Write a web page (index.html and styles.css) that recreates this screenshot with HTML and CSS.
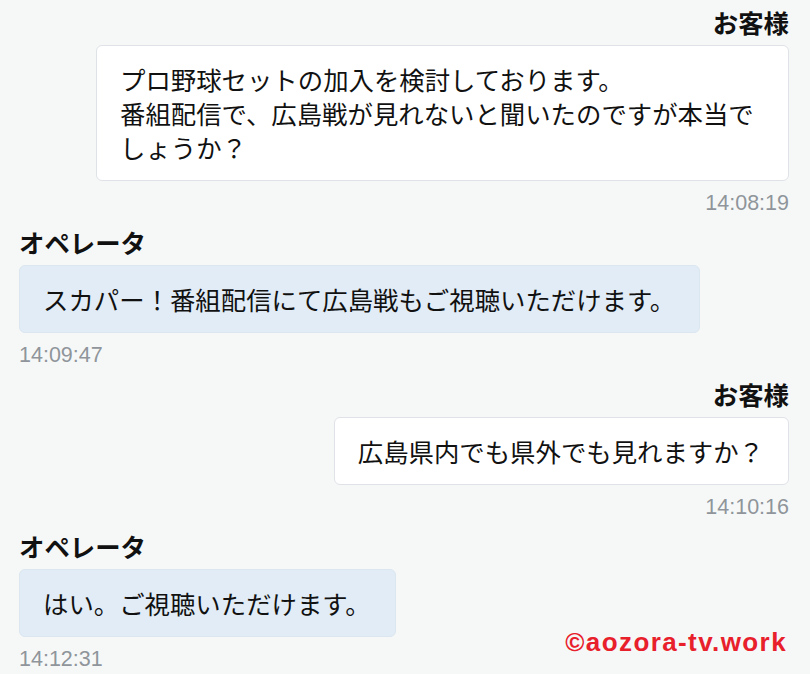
FILE: index.html
```html
<!DOCTYPE html>
<html lang="ja">
<head>
<meta charset="utf-8">
<title>チャット</title>
<link rel="stylesheet" href="styles.css">
</head>
<body>
<div class="chat">
  <div class="msg customer">
    <div class="name">お客様</div>
    <div class="bubble">プロ野球セットの加入を検討しております。<br>番組配信で、広島戦が見れないと聞いたのですが本当でしょうか？</div>
    <div class="time">14:08:19</div>
  </div>
  <div class="msg operator">
    <div class="name">オペレータ</div>
    <div class="bubble">スカパー！番組配信にて広島戦もご視聴いただけます。</div>
    <div class="time">14:09:47</div>
  </div>
  <div class="msg customer">
    <div class="name">お客様</div>
    <div class="bubble">広島県内でも県外でも見れますか？</div>
    <div class="time">14:10:16</div>
  </div>
  <div class="msg operator">
    <div class="name">オペレータ</div>
    <div class="bubble">はい。ご視聴いただけます。</div>
    <div class="time">14:12:31</div>
  </div>
</div>
<div class="watermark">©aozora-tv.work</div>
</body>
</html>
```
FILE: styles.css
```css
html, body {
  margin: 0;
  padding: 0;
  background: #f6f8f8;
}
body {
  font-family: "Noto Sans CJK JP", "Noto Sans", sans-serif;
  color: #111;
  width: 810px;
  height: 674px;
  overflow: hidden;
  position: relative;
}
.chat {
  display: flex;
  flex-direction: column;
  gap: 8px;
  padding: 5px 21px 0 19px;
}
.msg {
  display: flex;
  flex-direction: column;
}
.customer {
  align-items: flex-end;
}
.operator {
  align-items: flex-start;
}
.name {
  font-size: 25.4px;
  font-weight: bold;
  line-height: 34px;
  margin-bottom: 6px;
}
.bubble {
  font-size: 25.4px;
  line-height: 34px;
  padding: 16px 24px 16px 23px;
  border-radius: 6px;
  max-width: 90%;
  box-sizing: border-box;
}
.customer .bubble {
  background: #ffffff;
  border: 1px solid #dfe3e7;
}
.operator .bubble {
  background: #e1ecf6;
  border: 1px solid #dbe6f0;
}
.time {
  font-family: "Liberation Sans", Arial, sans-serif;
  font-size: 21.5px;
  line-height: 28px;
  color: #8f959a;
  margin-top: 8px;
}
.watermark {
  position: absolute;
  right: 23px;
  top: 627px;
  font-family: "Liberation Sans", Arial, sans-serif;
  font-weight: bold;
  font-size: 26px;
  letter-spacing: 1.4px;
  color: #e8202b;
}
```
